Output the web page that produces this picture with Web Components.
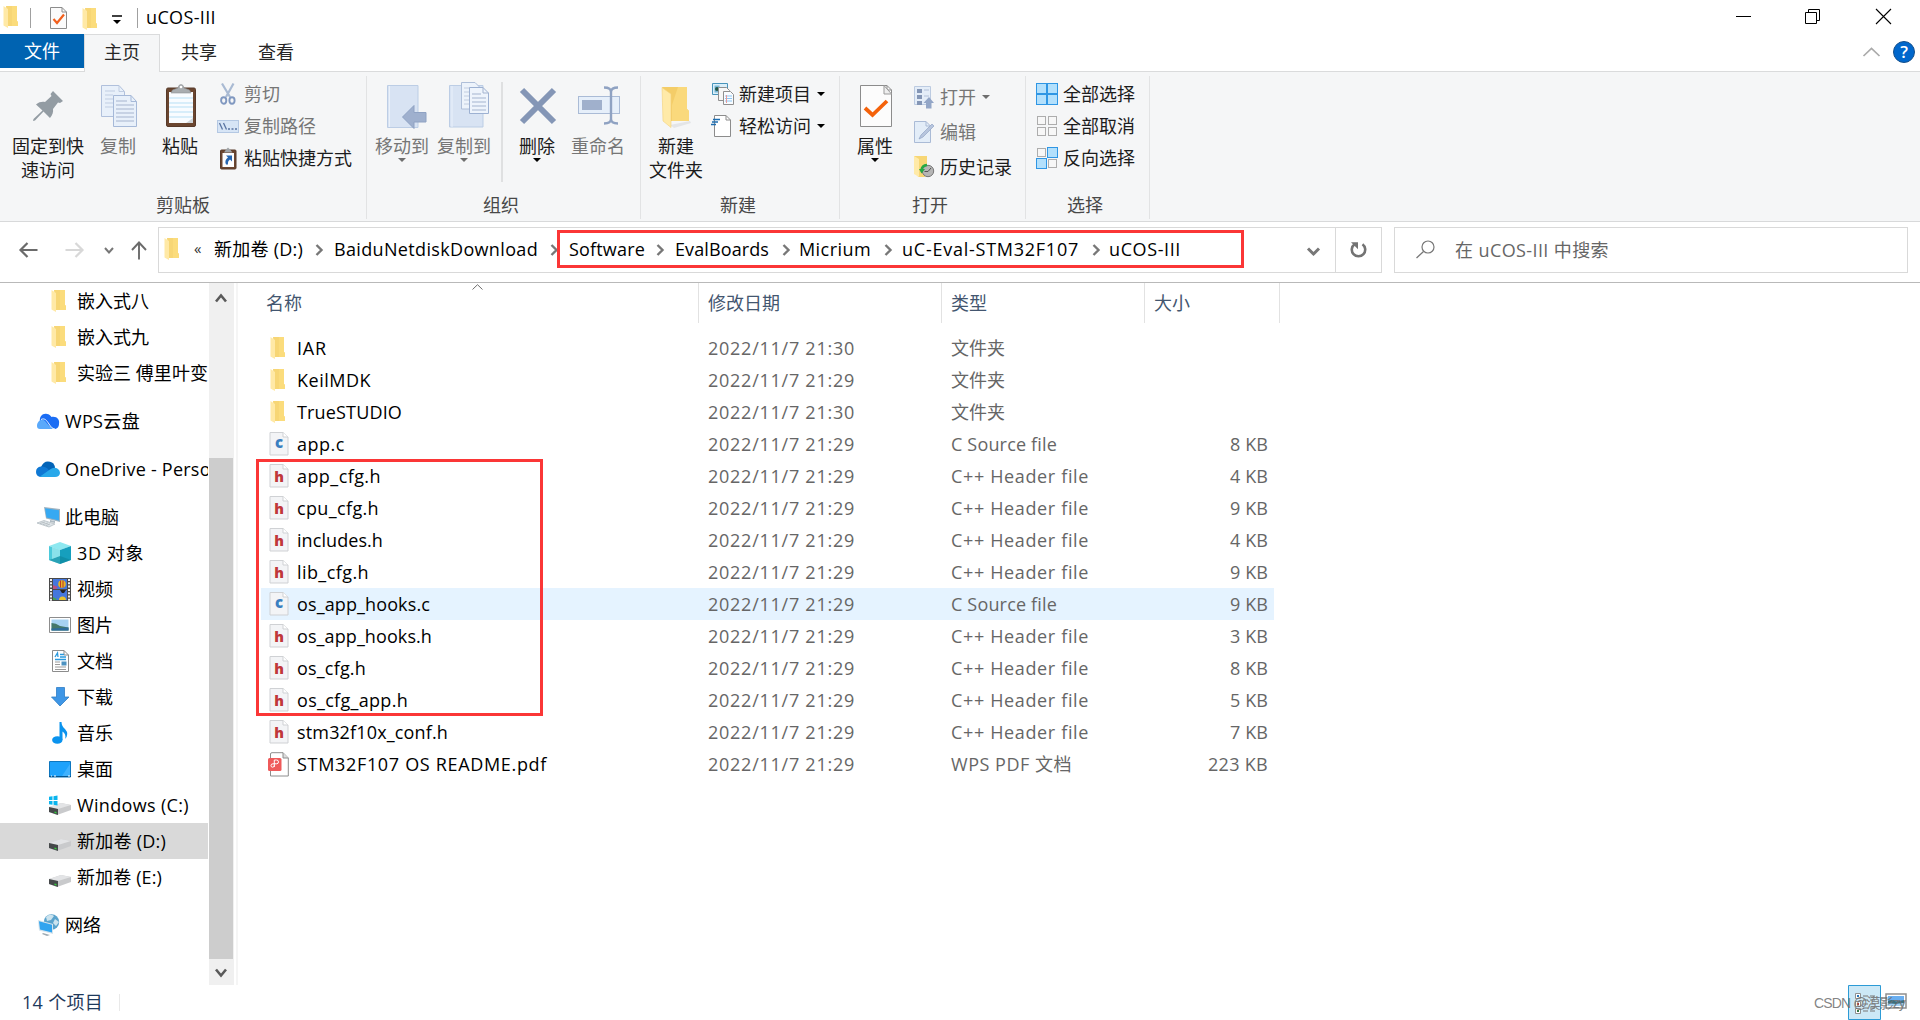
<!DOCTYPE html>
<html lang="zh-CN">
<head>
<meta charset="utf-8">
<title>uCOS-III</title>
<style>
html,body{margin:0;height:100%;overflow:hidden;background:#fff}
body{font:380 18px/24px "Open Sans","Noto Sans CJK SC",sans-serif;color:#000}
</style>
</head>
<body>
<explorer-window></explorer-window>
<script>
const folder = '<path d="M3 0H14V15L15 16V20H5Z" fill="#f7d675"/><path d="M9 0h5v15l1 1v4H9z" fill="#fbdc7c"/><path d="M0.500 0L5 3V22L0.500 19.500Z" fill="#ffe9a6"/>';
const page = (s,f,w=18,h=22) => `<path d="M.5 .5H${w-5}L${w-.5} 5V${h-.5}H.5Z" fill="${f}" stroke="${s}"/><path d="M${w-5} .5V5H${w-.5}" fill="none" stroke="${s}"/>`;
const drive = '<path d="M0 8L12 4L22 6V11L8 16L0 13Z" fill="#c9cacc"/><path d="M0 8L12 4L22 6L9 10Z" fill="#e3e4e6"/><path d="M0 8L9 10V16L0 13Z" fill="#45484a"/><path d="M5.500 12.500l2 .5v1.500l-2-.5z" fill="#35d03c"/>';
const fileBase = '<path d="M1 .5H14L19 5V23H1Z" fill="#f3f4f6" stroke="#cfd1d4"/><path d="M14 .5V5H19" fill="#fff" stroke="#cfd1d4"/>';
const box = (x,y,on) => on ? `<rect x="${x+.5}" y="${y+.5}" width="10" height="10" fill="#b3e0fc" stroke="#2f96e4"/>` : `<rect x="${x+1.500}" y="${y+1.500}" width="8" height="8" fill="#f7f7f7" stroke="#adadad"/>`;
const ICONS = {
  folder:[15,22,folder],
  propSmall:[18,22,page('#8c8c8c','#fbfbfb',17)+'<path d="M3.500 12l3.500 4L14 7.500" fill="none" stroke="#f2601d" stroke-width="2.200"/>'],
  qat:[10,9,'<path d="M0 1h10" stroke="#000" stroke-width="1.500"/><path d="M1 5h8L5 9Z"/>'],
  min:[15,15,'<path d="M0 7.500h15" stroke="#000"/>'],
  max:[15,15,'<path d="M.5 3.500h11v11H.5zM3.500 3.500V.5h11v11h-3" fill="none" stroke="#000"/>'],
  close:[15,15,'<path d="M0 0l15 15M15 0L0 15" stroke="#000" stroke-width="1.100"/>'],
  up:[17,10,'<path d="M.5 9L8.500 1.500L16.500 9" fill="none" stroke="#aaa" stroke-width="1.700"/>'],
  help:[22,22,'<circle cx="11" cy="11" r="10.500" fill="#0067cc" stroke="#15508c"/><text x="11" y="17" text-anchor="middle" font-family="Open Sans" font-weight="600" font-size="17" fill="#fff">?</text>'],
  pin:[30,30,'<path d="M20 0L30 10L27 12L25 11.500L20 18C20.500 21 19.500 24 17 27L10.500 20.500L2 29.500L0 30L.5 28L9.500 19.500L3 13.500C6 11 9 10.500 12 11L18.500 5L17.500 3Z" fill="#939ca3"/>'],
  copy:[36,42,'<path d="M.5 .5H18L23.500 6.500V31.500H.5Z" fill="#e8f0fa" stroke="#b0c0dc"/><path d="M18 .5V6.500h5.500M4 6h10M4 10h8M4 14h8M4 18h8M4 22h8" fill="none" stroke="#c0cde2"/><path d="M12.500 10.500H30L35.500 16.500V41.500H12.500Z" fill="#e8f0fa" stroke="#a6b9d8"/><path d="M30 10.500V16.500H35.500" fill="none" stroke="#a6b9d8"/><path d="M15 16h11M15 20h18M15 24h18M15 28h18M15 32h18M15 36h18" stroke="#a6b4ce" stroke-width="1.200"/>'],
  paste:[30,43,'<rect x=".5" y="4" width="29" height="38.500" rx="1.500" fill="#6b4630" stroke="#573a2a"/><path d="M3 8h24v31H3z" fill="#f9fcff"/><path d="M3 14h24M3 19h24M3 23h24M3 28h24M3 33h24" stroke="#b7dff5"/><path d="M27 34v5h-7z" fill="#cfd5da"/><path d="M5 9L6.500 6L12 4Q12.500 .5 15 .5T18 4L23.500 6L25 9Z" fill="#a9adb0" stroke="#8d9194" stroke-width=".6"/><circle cx="15" cy="3" r="1.300" fill="#fff"/>'],
  cut:[16,22,'<path d="M2 .5L10 14M13.500 .5L6 14" stroke="#a9bad3" stroke-width="2.200"/><ellipse cx="3.700" cy="17.500" rx="2.600" ry="3.200" fill="none" stroke="#8098c0" stroke-width="1.900"/><ellipse cx="12" cy="17.500" rx="2.600" ry="3.200" fill="none" stroke="#8098c0" stroke-width="1.900"/>'],
  path:[22,13,'<rect x=".5" y=".5" width="21" height="12" fill="#d7e5f6" stroke="#b4c8e3"/><path d="M2.500 3L5.500 9.500M6.500 3L9.500 9.500" stroke="#5a74a2" stroke-width="1.300"/><path d="M11 9h2M14.500 9h2M18 9h2" stroke="#5a74a2" stroke-width="1.500"/>'],
  shortcut:[17,23,'<rect x=".5" y="3" width="15.500" height="19" rx="1" fill="#6b4630" stroke="#573a2a"/><path d="M2.500 6h11.500v14H2.500z" fill="#fdfdfd"/><path d="M4 5.500L6 2.500L8 .5L10 2.500L12.500 5.500Z" fill="#a0a4a7"/><path d="M6 8.500H12V14.500L10 12.500Q7.500 14 8 17.500H6Q4 13.500 8 10.500Z" fill="#2565b0"/>'],
  move:[40,44,'<path d="M.5 .5H31V42.500H.5Z" fill="#d8e3f3" stroke="#bccde5"/><path d="M2.500 1v41" stroke="#eaf1fb"/><path d="M15.500 32L27 20.500V27.500H39V37H27V43.500Z" fill="#9fb0ce" stroke="#8fa2c3"/>'],
  copyto:[41,46,'<path d="M.5 3.500H34V45H.5Z" fill="#d8e3f3" stroke="#bccde5"/><path d="M3 4v41" stroke="#eaf1fb"/><path d="M12.500 .5H26L31.500 6V27H12.500Z" fill="#edf3fb" stroke="#afbfd9"/><path d="M15 6h8M15 10h5M15 14h5M15 18h5M15 22h5" stroke="#c2cde0"/><path d="M20.500 5.500H34L39.500 11V31.500H20.500Z" fill="#eef4fc" stroke="#9db1d2"/><path d="M34 5.500V11h5.500M23 12h9M23 16h14M23 20h14M23 24h14M23 28h14" fill="none" stroke="#a4b4cf"/>'],
  del:[38,38,'<path d="M3 3L35 35M35 3L3 35" stroke="#8496b6" stroke-width="6"/>'],
  rename:[42,39,'<rect x=".5" y="10.500" width="41" height="17" fill="#e6effa" stroke="#aabbd6"/><rect x="4" y="14" width="20" height="10" fill="#a0b0cc"/><path d="M26 1.500Q33 1.500 33 6Q33 1.500 40 1.500M33 4v31M26 37.500Q33 37.500 33 33Q33 37.500 40 37.500" fill="none" stroke="#8fa2c2" stroke-width="2.400"/>'],
  bigfolder:[29,42,'<path d="M8 38L28 34L29 36L12 41Z" fill="#e4e5e7"/><path d="M0 0H25V22L27 24V34H7Z" fill="#f4cd68"/><path d="M16 0H25V22L27 24V34H10V18Z" fill="#fad97c"/><path d="M0 .5L9 7V40.500L1 34Z" fill="#ffeaa8" stroke="#f4d27b" stroke-width=".6"/>'],
  newitem:[22,22,'<path d="M.5 .5h15v11H.5z" fill="#dceff9" stroke="#4894bb"/><path d="M2.500 2.500h5v7h-5z" fill="#79b7d7"/><circle cx="5" cy="6" r="2" fill="#235848"/><path d="M6.500 4.500h8l3 3v10h-11z" fill="#f7f7f7" stroke="#8f8f8f"/><path d="M11.500 8.500h7l3 3v10h-10z" fill="#f9fcff" stroke="#8f8f8f"/><path d="M13 13h7M13 15.500h7M13 18h7" stroke="#8cc7f5"/><path d="M14.500 12v8" stroke="#e79b9b"/>'],
  easy:[22,22,'<g transform="translate(2,0)">'+page('#8c8c8c','#fff',17)+'</g><path d="M1 4.500h7M0 7h6M-1 9.500h5" stroke="#1e6eb1" stroke-width="1.300"/>'],
  prop:[32,43,page('#8c8c8c','#fcfcfc',32,42)+'<path d="M24 .5V9H31.500L24 .5" fill="#eee" stroke="#9b9b9b"/><path d="M5 23l7.500 7L27 16" fill="none" stroke="#f4620b" stroke-width="3.800"/>'],
  open:[20,23,'<path d="M.5 .5h16v18H.5z" fill="#e4edf8" stroke="#bccbe1"/><path d="M3 3h5v4H3zM3 9h5v4H3zM3 15h5v4H3z" fill="#8496b6"/><path d="M10 4h5M10 10h5" stroke="#b2c0d9"/><path d="M9.500 17L15 11L20 17H17.500V22.500H12V17Z" fill="#93a6c7"/>'],
  edit:[20,22,page('#aabbd6','#e3edf8',17)+'<path d="M5 18L7 14L18 3L20 5L9 16Z" fill="#b7c5dd" stroke="#92a5c5" stroke-width=".7"/>'],
  history:[20,22,'<path d="M0 0H13V16L11 21H4Z" fill="#f7d675"/><path d="M0 0L5 3V21L0 18Z" fill="#ffeaa8"/><circle cx="14" cy="15" r="5.700" fill="#b5b5b5" stroke="#777"/><path d="M10.500 15.500L14 15.500L17 12" fill="none" stroke="#555"/><path d="M13 9Q8 9.500 7.500 14" fill="none" stroke="#26a844" stroke-width="2.500"/><path d="M5 13h6l-3.500 4.500z" fill="#26a844"/>'],
  selall:[22,22,box(0,0,1)+box(11,0,1)+box(0,11,1)+box(11,11,1)],
  selnone:[22,22,box(0,0)+box(11,0)+box(0,11)+box(11,11)],
  selinv:[22,22,box(0,0)+box(11,0,1)+box(0,11,1)+box(11,11)],
  back:[19,16,'<path d="M18.500 8H2M8.500 1L1.500 8L8.500 15" fill="none" stroke="#6b6b6b" stroke-width="2.200"/>'],
  fwd:[19,16,'<path d="M.5 8H17M10.500 1L17.500 8L10.500 15" fill="none" stroke="#d8d8d8" stroke-width="2.200"/>'],
  smalldown:[10,7,'<path d="M1 1L5 5.500L9 1" fill="none" stroke="#777" stroke-width="2"/>'],
  upnav:[16,19,'<path d="M8 18.500V1.500M1 9L8 1.500L15 9" fill="none" stroke="#6b6b6b" stroke-width="1.900"/>'],
  down:[13,9,'<path d="M1 1.500L6.500 7L12 1.500" fill="none" stroke="#777" stroke-width="3"/>'],
  gt:[8,12,'<path d="M1.500 1L6.500 6L1.500 11" fill="none" stroke="#777" stroke-width="2.400"/>'],
  refresh:[18,18,'<path d="M12.500 3.200A6.700 6.700 0 1 1 4.500 3.200" fill="none" stroke="#737373" stroke-width="2.600"/><path d="M1 1.200h7v7z" fill="#737373"/>'],
  search:[19,19,'<circle cx="12" cy="7" r="6" fill="none" stroke="#777" stroke-width="1.200"/><path d="M7.500 11.500L.5 18" stroke="#777" stroke-width="1.300"/>'],
  sbup:[12,10,'<path d="M1 8.500L6 2.500L11 8.500" fill="none" stroke="#5a5a5a" stroke-width="2.600"/>'],
  sbdown:[12,10,'<path d="M1 1.500L6 7.500L11 1.500" fill="none" stroke="#5a5a5a" stroke-width="2.600"/>'],
  sort:[11,6,'<path d="M.5 5.500L5.500 .7L10.500 5.500" fill="none" stroke="#6e6e6e"/>'],
  wps:[23,17,'<path d="M3 9C2 3 6 0 10 1C12 1 13.500 2.500 14.500 4C20 3 23 7 22 11C22 14 20 16 17 16Z" fill="#1b6df4"/><path d="M0 13C0 8 5 5 8 8C11 11 13 15 17 16H3C1 16 0 15 0 13Z" fill="#5aa9fb"/><path d="M4 6.500C8 4.500 10 8 12 11C14 14 15 15.500 18 16" fill="none" stroke="#e9f4ff" stroke-width="1"/>'],
  onedrive:[24,16,'<path d="M5 6C7 1 11-1 16 1.500Q19 3.500 19 7L12 11Z" fill="#0364b8"/><path d="M0 11Q0 6 5 5.500Q8 5 11 7L16 13L6 16Q0 16 0 11Z" fill="#0f78d4"/><path d="M4 15.500L14 8.500Q18 5.500 22 8Q24 9.500 24 12Q23.500 16 19 16H6Z" fill="#28a8ea"/>'],
  pc:[24,22,'<path d="M7 1L23 3V16L9 12.500Z" fill="#9fb2bf"/><path d="M8 2.200L22 4.200V14.500L9.500 11.500Z" fill="#36a9f2"/><path d="M13 14l5 1v2l-5-1z" fill="#aebac2"/><path d="M0 17L7 14.500L18 18L12 21Z" fill="#dde3e7" stroke="#aeb7bd" stroke-width=".7"/><path d="M3 17.500l5-1.500M6 18.500l5-1.500M9 19.500l4-1.500" stroke="#a8b0b5" stroke-width=".7"/>'],
  cube:[22,22,'<path d="M0 4L11 0L22 4L11 8Z" fill="#8ee8f0"/><path d="M0 4L11 8V22L0 18Z" fill="#4ccadb"/><path d="M22 4L11 8V22L22 18Z" fill="#169fbd"/><path d="M0 18l11-4 11 4-11 4z" fill="#0d8298" opacity=".55"/><path d="M3 5L11 8V14L3 17Z" fill="#b4f0f4" opacity=".6"/>'],
  video:[22,23,'<path d="M0 0h22v23H0z" fill="#4a4a4a"/><path d="M4 1h14v10H4zM4 12h14v10H4z" fill="#4577dd"/><path d="M2 1v22M20 1v22" stroke="#f0f0f0" stroke-width="2" stroke-dasharray="2 1.300"/><circle cx="13" cy="6" r="3.800" fill="#e8b325"/><path d="M11.500 2.500v7M14 2.500v7" stroke="#be3b28"/><path d="M4 7l5 2-2 2H4z" fill="#b85180"/><path d="M11 12h6l-2 3h-2z" fill="#232323"/><path d="M10 22q0-3.500 3.500-3.500T17 22z" fill="#e8c22c"/><path d="M4 19l4 2-1 1H4z" fill="#45a158"/>'],
  pic:[22,16,'<path d="M.5 .5h21v15H.5z" fill="#fff" stroke="#8d8d8d"/><path d="M2.500 2.500h17v11h-17z" fill="#a6d2f2"/><path d="M2.500 6Q7 6 11 9L19.500 10.500V13.500h-17z" fill="#45786a"/><path d="M2.500 11.500L19.500 10.500v3h-17z" fill="#2f6d9b"/>'],
  doc:[17,22,page('#8c8c8c','#fff',17)+'<path d="M3 7L5.500 3L6 7M8 4.500h4M8 7h6M3 9.500h11" fill="none" stroke="#2a99dd" stroke-width="1.300"/><path d="M3 12h5M3 14.500h5M3 17h11M3 19.500h11" stroke="#9a9a9a"/><path d="M9.500 11.500h5v4h-5z" fill="#4c92c1"/>'],
  dl:[18,20,'<path d="M5.500 .5h8V10H18L9 19L.5 10H5.500Z" fill="#3e96e6" stroke="#2f7dc5" stroke-width=".8"/>'],
  music:[16,22,'<ellipse cx="5.300" cy="18" rx="5.200" ry="3.800" fill="#0a93ee"/><path d="M7.500 0H9.500Q9.500 4 13 7Q17.500 12 13 17Q14.500 12 10.500 9.500V18H7.500Z" fill="#0a93ee"/>'],
  desk:[22,17,'<path d="M.5 .5h21v15.500H.5z" fill="#1ea2fb" stroke="#0d76bf"/><path d="M13 15L21 3v12z" fill="#40b1fd"/><path d="M0 15.500h22" stroke="#06558d"/><path d="M2 15h1M5 15h2M19 15h2" stroke="#fff"/>'],
  winc:[22,19,'<g transform="translate(0,3)">'+drive+'</g><path d="M0 .8l3.500-.5v3.700H0zM4.500 .2l4-.6V4h-4zM0 5h3.500v3.700L0 8.200zM4.500 5h4v4.400l-4-.6z" fill="#09b4ee"/>'],
  drive:[22,19,'<g transform="translate(0,3)">'+drive+'</g>'],
  net:[22,22,'<circle cx="13.500" cy="8" r="7.700" fill="#5aa3cc"/><path d="M8 3Q12-1 16 2L13 6L9 7ZM17 5L21 8L18 12L15 9Z" fill="#cbe3ee"/><path d="M0 6L15 10V20L1 16.500Z" fill="#d6e4ec"/><path d="M1 7.200L14 10.700V18.500L2 15.500Z" fill="#31a4ef"/><path d="M5 19l7 2-3 1-5-2z" fill="#9fabb3"/>'],
  h:[20,24,fileBase+'<text x="10" y="17.500" text-anchor="middle" font-family="Open Sans" font-weight="800" font-size="14.500" fill="#c0383b">h</text>'],
  c:[20,24,fileBase+'<text x="10" y="16" text-anchor="middle" font-family="Open Sans" font-weight="800" font-size="15" fill="#3a7fc0">c</text>'],
  pdf:[21,25,'<path d="M4 .7H15L20.300 6V24H2.500V2Q2.500 .7 4 .7Z" fill="#fff" stroke="#8e8e8e"/><path d="M15 .7V6h5.300" fill="#ddd" stroke="#8e8e8e"/><rect y="6" width="13.500" height="13" rx="1.500" fill="#ef5a5a"/><path d="M6.300 15V8H8.500Q10.500 8 10.500 9.900T8.500 11.800H5Q3 11.800 3 13.500T4.600 15.200T6.300 13.500" fill="none" stroke="#fff" stroke-width="1"/>'],
  details:[33,35,'<path d="M.5 .5h32V34.500H.5z" fill="#cce8f6" stroke="#2c9bd6"/><g fill="#fff" stroke="#8f8f8f"><path d="M7.500 8.500h5v5h-5zM7.500 16.500h5v5h-5zM7.500 23.500h5v5h-5z"/></g><path d="M9 11h2" stroke="#2676bd" stroke-width="2"/><path d="M9 19h2" stroke="#d33" stroke-width="2"/><path d="M9 26h2" stroke="#374" stroke-width="2"/><path d="M15 11h5M22 11h5M15 15h5M22 15h5M15 19h5M22 19h5M15 23h5M22 23h5M15 26h5M22 26h5" stroke="#777"/>'],
  thumbs:[22,16,'<path d="M1 1h20v14H1z" fill="#fff" stroke="#8f8f8f" stroke-width="1.500"/><path d="M3 3h16v10H3z" fill="#69aef0"/><path d="M3 8Q7 6 11 8.500L19 7V10L11 11L3 10.500Z" fill="#3e6f7e"/><path d="M3 10.500L11 11L19 10V13H3z" fill="#9fd0f3"/>']
};
const make = (html, ready) => class extends HTMLElement {
  connectedCallback(){
    if(this.shadowRoot) return;
    const root=this.attachShadow({mode:'open'});
    root.innerHTML = typeof html==='function' ? html(this) : html;
    if(ready) ready(this,root);
  }
};
const at=(e,n,d='')=>e.getAttribute(n)??d;
const t=(text,w,style='')=>`<ui-text w="${w}" style="${style}">${text}</ui-text>`;
const ic=(n,style='')=>`<ui-icon name="${n}" style="${style}"></ui-icon>`;

customElements.define('ui-icon', make(e=>{
  const [w,h,s]=ICONS[at(e,'name')];
  return `<style>:host{display:block;flex:none;width:${w}px;height:${h}px}svg{display:block;overflow:visible}</style><svg width="${w}" height="${h}" viewBox="0 0 ${w} ${h}">${s}</svg>`;
}));

customElements.define('title-bar', make(`<style>
:host{display:flex;height:34px;flex:none;align-items:flex-start}
i{width:1px;height:20px;background:#a0a0a0;margin-top:8px}
.sys{margin-left:auto;display:flex;gap:55px;padding:9px 29px 0 0}
</style>${ic('folder','margin:6px 0 0 3px')}<i style="margin-left:12px"></i>${ic('propSmall','margin:7px 0 0 19px')}
${ic('folder','margin:8px 0 0 14px')}${ic('qat','margin:15px 0 0 15px')}<i style="margin-left:15px"></i>
${t('uCOS-III',70,'margin:5px 0 0 8px')}<div class="sys">${ic('min')}${ic('max','margin:0 1px 0 -1px')}${ic('close')}</div>`));

customElements.define('tab-strip', make(`<style>
:host{display:flex;height:37px;flex:none;border-bottom:1px solid #dadbdc;box-sizing:content-box;color:#262626}
div{height:34px;line-height:34px;box-sizing:border-box}
.file{width:84px;background:#0063b1;color:#fff;padding-left:24px}
.on{width:76px;height:38px;border:1px solid #dadbdc;border-bottom:0;background:#f5f6f7;padding-left:19px}
</style><div class="file">${t('文件',36)}</div><div class="on">${t('主页',36)}</div>
<div style="padding:1px 0 0 21px;width:98px">${t('共享',36)}</div><div style="padding-top:1px">${t('查看',36)}</div>
${ic('up','margin:13px 13px 0 auto')}${ic('help','margin:7px 5px 0 0')}`));

customElements.define('ribbon-group', make(e=>`<style>
:host{display:flex;flex-direction:column;flex:none;box-sizing:border-box;height:149px;position:relative}
:host::after{content:"";align-self:flex-end;width:1px;height:143px;margin-top:-145px;background:#e2e3e4}
.items{display:flex;height:121px;align-items:flex-start;flex:none}
.label{height:24px;flex:none;color:#484848;padding-left:${at(e,'lx')}px;margin-bottom:4px}
</style><div class="items"><slot></slot></div><div class="label">${t(at(e,'label'),at(e,'label').length*18)}</div>`));

customElements.define('big-button', make(e=>{
  const c=at(e,'off')==='1'?'#767676':'#1c1c1c', ls=at(e,'label').split('|');
  return `<style>:host{display:flex;flex-direction:column;align-items:center;flex:none;width:${at(e,'width')}px;color:${c}}
.pic{height:62px;display:flex;padding:${at(e,'top',13)}px 0 0 ${at(e,'dx',0)*2}px;box-sizing:border-box}
.arrow{width:0;border:4px solid transparent;border-top-color:${at(e,'off')==='1'?'#6e6e6e':'#000'};border-bottom:0}
</style><div class="pic">${ic(at(e,'icon'))}</div>${ls.map(l=>t(l,l.length*18)).join('')}${e.hasAttribute('menu')?'<div class="arrow"></div>':''}`;
}));

customElements.define('small-button', make(e=>{
  const off=at(e,'off')==='1', l=at(e,'label');
  return `<style>:host{display:flex;align-items:center;height:32px;color:${off?'#767676':'#1c1c1c'}}
.pic{width:22px;margin-right:5px;display:flex;align-items:center;justify-content:center}
.arrow{margin-left:6px;border:4px solid transparent;border-top-color:${off?'#6e6e6e':'#000'};border-bottom:0}
</style><div class="pic">${ic(at(e,'icon'))}</div>${t(l,l.length*18)}${e.hasAttribute('menu')?'<div class="arrow"></div>':''}`;
}));

const big=(icon,label,width,ml,top=13,x='')=>`<big-button icon="${icon}" label="${label}" width="${width}" top="${top}" ${x} style="margin-left:${ml}px"></big-button>`;
const small=(icon,label,x='')=>`<small-button icon="${icon}" label="${label}" ${x}></small-button>`;
customElements.define('ribbon-bar', make(`<style>
:host{display:flex;height:149px;flex:none;background:#f5f6f7;border-bottom:1px solid #d8d9da}
.col{display:flex;flex-direction:column}
.sep{width:2px;height:100px;background:#dfe0e1;margin-top:10px}
</style>
<ribbon-group label="剪贴板" lx="156" style="width:367px">
${big('pin','固定到快|速访问',80,8,19)}${big('copy','复制',50,5,13,'off="1" dx="1"')}${big('paste','粘贴',50,12,12,'dx="1"')}
<div class="col" style="padding:6px 0 0 12px">${small('cut','剪切','off="1"')}${small('path','复制路径','off="1"')}${small('shortcut','粘贴快捷方式')}</div></ribbon-group>
<ribbon-group label="组织" lx="116" style="width:274px">
${big('move','移动到',60,5,13,'off="1" menu dx="5"')}${big('copyto','复制到',60,2,10,'off="1" menu dx="5"')}<div class="sep" style="margin-left:7px"></div>${big('del','删除',50,9,15,'menu dx="1"')}${big('rename','重命名',60,6,14,'off="1" dx="1"')}</ribbon-group>
<ribbon-group label="新建" lx="79" style="width:199px">
${big('bigfolder','新建|文件夹',60,5,15)}<div class="col" style="padding:6px 0 0 6px">${small('newitem','新建项目','menu')}${small('easy','轻松访问','menu')}</div></ribbon-group>
<ribbon-group label="打开" lx="72" style="width:186px">
${big('prop','属性',50,10,13,'menu dx="1"')}<div class="col" style="padding:9px 0 0 13px;gap:3px">${small('open','打开','off="1" menu')}${small('edit','编辑','off="1"')}${small('history','历史记录')}</div></ribbon-group>
<ribbon-group label="选择" lx="41" style="width:124px">
<div class="col" style="padding:6px 0 0 10px">${small('selall','全部选择')}${small('selnone','全部取消')}${small('selinv','反向选择')}</div></ribbon-group>`));

const crumb=(s,w,ml)=>t(s,w,`margin:-2px 0 0 ${ml}px`);
customElements.define('address-bar', make(`<style>
:host{display:flex;height:60px;flex:none;border-bottom:1px solid #b9b9b9;align-items:flex-start}
.nav{display:flex;align-items:center;height:56px;width:158px;flex:none}
.box{display:flex;align-items:center;height:46px;margin-top:5px;border:1px solid #d9d9d9;box-sizing:border-box;position:relative}
.mark{position:absolute;left:398px;top:2px;width:687px;height:38px;border:3px solid #fb3636;box-sizing:border-box}
.div{width:1px;height:44px;background:#d9d9d9}
</style><div class="nav">${ic('back','margin-left:19px')}${ic('fwd','margin-left:27px')}${ic('smalldown','margin-left:20px')}${ic('upnav','margin-left:17px')}</div>
<div class="box" style="width:1224px">${ic('folder','margin:0 0 2px 5px')}
${t('«',9,'margin:-4px 0 0 15px;color:#333;font-size:15px')}${crumb('新加卷 (D:)',89,11)}${ic('gt','margin-left:12px')}${crumb('BaiduNetdiskDownload',204,11)}${ic('gt','margin-left:12px')}
${crumb('Software',76,11)}${ic('gt','margin-left:11px')}${crumb('EvalBoards',94,11)}${ic('gt','margin-left:13px')}${crumb('Micrium',72,9)}${ic('gt','margin-left:13px')}${crumb('uC-Eval-STM32F107',177,10)}${ic('gt','margin-left:13px')}${crumb('uCOS-III',72,9)}
${ic('down','margin:2px 0 0 auto')}<div class="div" style="margin-left:15px"></div>${ic('refresh','margin:0 13px 0 14px')}<div class="mark"></div></div>
<div class="box" style="width:514px;margin-left:12px;color:#666">${ic('search','margin:-2px 0 0 21px')}${t('在 uCOS-III 中搜索',154,'margin-left:20px')}</div>`));

const NUDGE={folder:'margin-right:3px',pc:'margin-left:2px',net:'margin-left:1px'};
customElements.define('nav-item', make(e=>`<style>:host{display:flex;align-items:center;height:36px;flex:none;overflow:hidden;white-space:nowrap}
:host([on]){background:#d9d9d9}
.pic{display:flex;justify-content:center;width:24px;margin-left:${at(e,'root')?36:48}px;margin-right:5px;flex:none}</style>
<div class="pic">${ic(at(e,'icon'),NUDGE[at(e,'icon')]||'')}</div><slot></slot>`));
const nav=(icon,s,w,x='')=>`<nav-item icon="${icon}" ${x}>${t(s,w)}</nav-item>`;
customElements.define('nav-tree', make(`<style>
:host{display:flex;flex:none;height:702px;border-right:2px solid #f5f5f5;box-sizing:border-box;width:238px}
.list{width:208px;flex:none;display:flex;flex-direction:column}
.bar{margin-left:1px;width:25px;background:#f0f0f0;display:flex;flex-direction:column;align-items:center;height:702px}
.thumb{height:501px;width:24px;align-self:flex-start;background:#cdcdcd}
</style><div class="list">${nav('folder','嵌入式八',72)}${nav('folder','嵌入式九',72)}${nav('folder','实验三 傅里叶变换',149)}
${nav('wps','WPS云盘',75,'root="1" style="margin-top:12px"')}${nav('onedrive','OneDrive - Personal',172,'root="1" style="margin-top:12px"')}${nav('pc','此电脑',54,'root="1" style="margin-top:12px"')}
${nav('cube','3D 对象',67)}${nav('video','视频',36)}${nav('pic','图片',36)}${nav('doc','文档',36)}${nav('dl','下载',36)}${nav('music','音乐',36)}${nav('desk','桌面',36)}${nav('winc','Windows (C:)',112)}${nav('drive','新加卷 (D:)',89,'on')}${nav('drive','新加卷 (E:)',85)}
${nav('net','网络',36,'root="1" style="margin-top:12px"')}</div>
<div class="bar">${ic('sbup','margin:10px 1px 155px 0')}<div class="thumb"></div>${ic('sbdown','margin:9px 1px 0 0')}</div>`));

customElements.define('file-row', make(e=>`<style>
:host{display:flex;align-items:center;height:32px;width:1013px;color:#666;flex:none}
:host([on]){background:#e5f3ff}
.pic{width:28px;margin-left:8px;flex:none;display:flex}
.name{width:411px;color:#000}.date{width:243px}.type{width:193px}.size{width:124px;display:flex;justify-content:flex-end}
</style><div class="pic">${ic(at(e,'icon'),at(e,'icon')==='folder'?'margin-left:1px':at(e,'icon')==='pdf'?'margin-left:-1px':'')}</div>
<div class="name">${t(at(e,'name'),at(e,'nw'))}</div><div class="date">${t(at(e,'date'),147)}</div><div class="type">${t(at(e,'type'),at(e,'tw'))}</div><div class="size">${at(e,'size')?t(at(e,'size'),at(e,'size').length>5?60:38):''}</div>`));
const F=[['folder','IAR',30],['folder','KeilMDK',74],['folder','TrueSTUDIO',105],['c','app.c',48,8],['h','app_cfg.h',84,4],['h','cpu_cfg.h',82,9],['h','includes.h',86,4],['h','lib_cfg.h',72,9],['c','os_app_hooks.c',133,9],['h','os_app_hooks.h',135,3],['h','os_cfg.h',69,8],['h','os_cfg_app.h',111,5],['h','stm32f10x_conf.h',151,7],['pdf','STM32F107 OS README.pdf',250,223]];
const T={folder:['文件夹',54],c:['C Source file',106],h:['C++ Header file',138],pdf:['WPS PDF 文档',121]};
customElements.define('file-list', make(`<style>
:host{display:flex;flex-direction:column;flex:1;position:relative;height:702px}
header{display:flex;height:40px;color:#43566f;margin-bottom:9px;flex:none}
header div{border-right:1px solid #e2e2e2;box-sizing:border-box;padding-top:8px}
.rows{padding-left:23px;display:flex;flex-direction:column}
.mark{position:absolute;left:18px;top:176px;width:287px;height:257px;border:3px solid #fb3636;box-sizing:border-box}
.sort{position:absolute;left:234px;top:1px}
</style><header><div style="width:461px;padding-left:28px">${t('名称',36)}</div><div style="width:243px;padding-left:9px">${t('修改日期',72)}</div><div style="width:203px;padding-left:9px">${t('类型',36)}</div><div style="width:135px;padding-left:9px">${t('大小',36)}</div></header>
<div class="rows">${F.map((f,i)=>`<file-row icon="${f[0]}" name="${f[1]}" nw="${f[2]}" date="2022/11/7 ${i===0||i===2?'21:30':'21:29'}" type="${T[f[0]][0]}" tw="${T[f[0]][1]}" size="${f[3]?f[3]+' KB':''}" ${i===8?'on':''}></file-row>`).join('')}</div>
<div class="sort">${ic('sort')}</div><div class="mark"></div>`));

customElements.define('status-bar', make(`<style>
:host{display:flex;height:35px;flex:none;color:#1e395b;position:relative}
.sep{width:1px;height:17px;background:#e9e9e9;margin:9px 0 0 16px}
.wm{position:absolute;left:1814px;top:8px;color:#6f6f6fdd;font-family:"Liberation Sans","Noto Sans CJK SC",sans-serif}
</style>${t('14 个项目',81,'margin:5px 0 0 22px')}<div class="sep"></div>${ic('details','margin-left:auto')}${ic('thumbs','margin:8px 13px 0 4px')}
<div class="wm">${t('CSDN @漠影zy',91,'font-size:14px;line-height:20px')}</div>`));

customElements.define('explorer-window', make(`<style>
:host{display:flex;flex-direction:column;width:1920px;height:1020px;overflow:hidden}
main{display:flex;height:702px;flex:none}
</style><title-bar></title-bar><tab-strip></tab-strip><ribbon-bar></ribbon-bar><address-bar></address-bar>
<main><nav-tree></nav-tree><file-list></file-list></main><status-bar></status-bar>`));

/* Text run tracked out or in so that it fills the width given in "w". */
customElements.define('ui-text', make('<style>:host{display:block;flex:none;white-space:nowrap}span{display:inline-block;white-space:nowrap}</style><span><slot></slot></span>',(e,root)=>{
  const s=root.querySelector('span'), w=+at(e,'w'), n=[...e.textContent].length;
  const d=(w-s.getBoundingClientRect().width)/n;
  if(Math.abs(d)>.01) s.style.letterSpacing=d.toFixed(3)+'px';
  e.style.width=w+'px';
}));
</script>
</body>
</html>
